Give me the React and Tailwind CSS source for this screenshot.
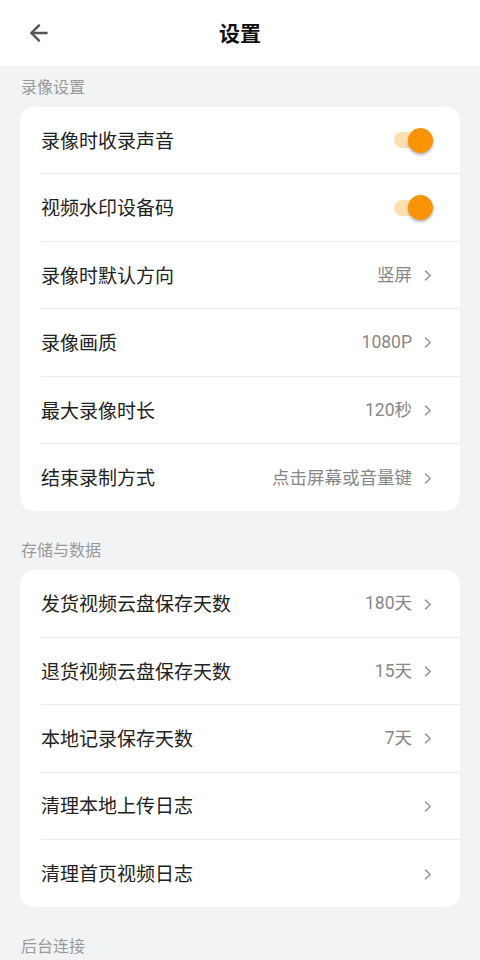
import { ArrowLeft } from "lucide-react";

const sections = [
  {
    title: "录像设置",
    rows: [
      { label: "录像时收录声音", toggle: true },
      { label: "视频水印设备码", toggle: true },
      { label: "录像时默认方向", value: "竖屏" },
      { label: "录像画质", value: "1080P" },
      { label: "最大录像时长", value: "120秒" },
      { label: "结束录制方式", value: "点击屏幕或音量键" },
    ],
  },
  {
    title: "存储与数据",
    rows: [
      { label: "发货视频云盘保存天数", value: "180天" },
      { label: "退货视频云盘保存天数", value: "15天" },
      { label: "本地记录保存天数", value: "7天" },
      { label: "清理本地上传日志", value: "" },
      { label: "清理首页视频日志", value: "" },
    ],
  },
  {
    title: "后台连接",
    rows: [],
  },
];

const Toggle = () => (
  <div className="relative w-[36px] h-[24px] flex items-center mr-[2px]">
    <div className="w-[34px] h-[16px] rounded-full bg-[#fde0b2]" />
    <div className="absolute right-[-3px] top-[-0.5px] w-[25px] h-[25px] rounded-full bg-[#fb9405] shadow-[0_2px_3px_rgba(0,0,0,0.3)]" />
  </div>
);

const Chevron = () => (
  <svg width="8" height="11" viewBox="0 0 8 11" fill="none" className="mt-[1px]">
    <path d="M1.5 1.2 L6.2 5.5 L1.5 9.8" stroke="#9a9a9a" strokeWidth="1.6" strokeLinecap="round" strokeLinejoin="round" />
  </svg>
);

const Row = ({ row, last }) => (
  <div className="pl-[21px]">
    <div className={`h-[67.4px] flex items-center justify-between pr-[28px] ${last ? "" : "border-b border-[#ececec]"}`}>
      <span className="text-[19px] text-[#222]">{row.label}</span>
      {row.toggle ? (
        <Toggle />
      ) : (
        <div className="flex items-center gap-[12px]">
          {row.value && (
            <span
              className="text-[17.5px] text-[#888]"
              style={{ fontFamily: 'Roboto, "Noto Sans CJK SC", sans-serif' }}
            >
              {row.value}
            </span>
          )}
          <Chevron />
        </div>
      )}
    </div>
  </div>
);

export default function App() {
  return (
    <div className="min-h-[960px] bg-[#f2f3f5]" style={{ fontFamily: '"Noto Sans CJK SC", "Noto Sans", sans-serif' }}>
      <div className="h-[66px] bg-white relative flex items-center justify-center">
        <ArrowLeft className="absolute left-[26px] w-[26px] h-[26px] text-[#555]" strokeWidth={2.2} />
        <span className="text-[21px] font-bold text-[#111]">设置</span>
      </div>
      <div className="px-[20px]">
        {sections.map((s, idx) => (
          <div key={s.title} className={idx === 0 ? "" : "mt-[18px]"}>
            <div className="h-[41px] flex items-center pl-[1px] pb-[2px] text-[16px] text-[#999]">{s.title}</div>
            {s.rows.length > 0 && (
              <div className="bg-white rounded-[14px] overflow-hidden">
                {s.rows.map((r, i) => (
                  <Row key={r.label} row={r} last={i === s.rows.length - 1} />
                ))}
              </div>
            )}
          </div>
        ))}
      </div>
    </div>
  );
}
